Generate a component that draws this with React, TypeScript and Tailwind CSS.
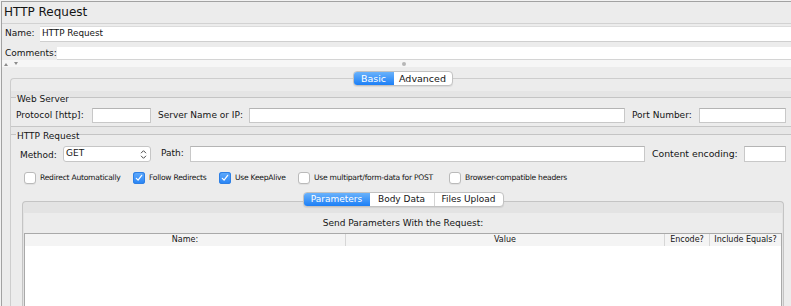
import type { ReactNode } from "react";

function Field({ className = "" }: { className?: string }) {
  return <div className={`h-[15px] border border-[#c8c8c8] border-t-[#b4b4b4] bg-white ${className}`} />;
}

function GroupTitle({ children }: { children: ReactNode }) {
  return (
    <div className="flex h-[8px] items-start">
      <div className="h-px w-[5px] bg-[#c4c4c4]" />
      <span className="-mt-[4px] px-px text-[9px] leading-[12px]">{children}</span>
      <div className="h-px flex-1 bg-[#c4c4c4]" />
    </div>
  );
}

function Check({ checked = false, label, className = "" }: { checked?: boolean; label: string; className?: string }) {
  return (
    <div className={`flex shrink-0 items-center ${className}`}>
      {checked ? (
        <div className="flex h-[12px] w-[12px] items-center justify-center rounded-[3px] bg-[linear-gradient(#63acfb,#2683f6)] shadow-[inset_0_0_0_1px_#2e7fe4]">
          <svg width="8" height="8" viewBox="0 0 8 8">
            <path d="M1.3 4.3 L3.1 6.2 L6.7 1.3" stroke="white" strokeWidth="1.2" fill="none" strokeLinecap="round" strokeLinejoin="round" />
          </svg>
        </div>
      ) : (
        <div className="h-[12px] w-[12px] rounded-[3px] border border-[#bababa] bg-white shadow-[0_1px_0_rgba(0,0,0,0.05)]" />
      )}
      <span className="ml-[4px] whitespace-nowrap text-[7.6px] leading-[12px] tracking-[-0.25px]">{label}</span>
    </div>
  );
}

function Segments({ items, widths, active, size }: { items: string[]; widths: string[]; active: number; size: string }) {
  return (
    <div className="relative z-10 flex h-[15px] overflow-hidden rounded-[4px] border border-[#c2c2c2] bg-white shadow-[0_1px_1px_rgba(0,0,0,0.08)]">
      {items.map((item, i) => (
        <div
          key={item}
          className={`${widths[i]} ${size} flex items-center justify-center leading-none ${
            i === active
              ? "bg-[linear-gradient(#6ab2fb,#1c7ff6)] text-white"
              : i > active + 1
                ? "border-l border-[#d4d4d4] text-[#141414]"
                : "text-[#141414]"
          }`}
        >
          {item}
        </div>
      ))}
    </div>
  );
}

export default function App() {
  return (
    <div className="h-[306px] w-[791px] overflow-hidden bg-[#f2f2f2] pl-px pt-px font-['DejaVu_Sans',sans-serif] text-[#141414]">
      <div className="flex h-full flex-col border-l border-t border-[#a2a2a2] bg-[#ececec]">
        <div className="h-[22px] border-b border-[#d2d2d2] pl-[2px] text-[12px] leading-[21px]">HTTP Request</div>

        {/* name + comments */}
        <div className="mt-[2px] flex h-[16px] items-center text-[9px]">
          <span className="w-[38px] pl-[3px]">Name:</span>
          <div className="flex h-full flex-1 items-center border-y border-t-[#dcdcdc] border-b-[#cfcfcf] bg-white pl-[2px] text-[8.8px]">
            HTTP Request
          </div>
        </div>
        <div className="mt-[5px] flex h-[13px] items-center text-[9px]">
          <span className="w-[55px] pl-[3px]">Comments:</span>
          <div className="h-full flex-1 border-b border-[#d4d4d4] bg-white" />
        </div>

        {/* split pane divider */}
        <div className="flex h-[7px] items-center bg-[#f6f6f6] pl-[2px]">
          <svg width="14" height="4" viewBox="0 0 14 4">
            <path d="M0 4 L2 1 L4 4 Z" fill="#8c8c8c" />
            <path d="M10 0 L14 0 L12 3 Z" fill="#8c8c8c" />
          </svg>
          <div className="ml-[384px] h-[4px] w-[4px] rounded-full bg-[#b6b6b6]" />
        </div>

        {/* Basic / Advanced */}
        <div className="flex flex-1 flex-col">
          <div className="mt-[4px] flex justify-center pl-[12px]">
            <Segments items={["Basic", "Advanced"]} widths={["w-[40px]", "w-[58px]"]} active={0} size="text-[9.5px]" />
          </div>
          <div className="-mt-[8px] ml-[8px] flex flex-1 flex-col rounded-tl-[4px] border-l border-t border-[#cdcdcd]">
            <div className="h-[12px]" />
            <div className="h-[6px] bg-[#e5e5e5]" />

            <GroupTitle>Web Server</GroupTitle>
            <div className="mt-[3px] flex h-[15px] items-center px-[5px] text-[9px]">
              <span className="w-[76px] whitespace-nowrap">Protocol [http]:</span>
              <Field className="w-[59px]" />
              <span className="ml-[7px] w-[91px] whitespace-nowrap">Server Name or IP:</span>
              <Field className="flex-1" />
              <span className="ml-[7px] w-[67px] whitespace-nowrap">Port Number:</span>
              <Field className="w-[87px]" />
            </div>
            <div className="mt-[3px] h-px bg-[#c6c6c6]" />
            <div className="h-[7px] bg-[#e7e7e7]" />

            <GroupTitle>HTTP Request</GroupTitle>
            <div className="mt-[4px] flex h-[16px] items-center pl-[9px] pr-[5px] text-[9px]">
              <span className="mt-[3px] w-[43px]">Method:</span>
              <div className="flex h-[16px] w-[88px] items-center justify-between rounded-[3px] border border-[#c6c6c6] bg-white pl-[2px] pr-[3px]">
                <span>GET</span>
                <svg width="7" height="11" viewBox="0 0 7 11">
                  <path d="M1 4.2 L3.5 1.7 L6 4.2 M1 6.8 L3.5 9.3 L6 6.8" stroke="#4a4a4a" strokeWidth="1" fill="none" />
                </svg>
              </div>
              <span className="ml-[10px] w-[29px]">Path:</span>
              <Field className="h-[16px] flex-1" />
              <span className="ml-[7px] w-[92px] whitespace-nowrap text-[9.3px]">Content encoding:</span>
              <Field className="h-[16px] w-[42px]" />
            </div>

            <div className="mt-[10px] flex h-[12px] items-center pl-[13px]">
              <Check className="w-[109px]" label="Redirect Automatically" />
              <Check className="w-[86px]" checked label="Follow Redirects" />
              <Check className="w-[79px]" checked label="Use KeepAlive" />
              <Check className="w-[151px]" label="Use multipart/form-data for POST" />
              <Check label="Browser-compatible headers" />
            </div>

            {/* Parameters / Body Data / Files Upload */}
            <div className="mt-[8px] flex justify-center pl-[11px] pr-[7px]">
              <Segments
                items={["Parameters", "Body Data", "Files Upload"]}
                widths={["w-[66px]", "w-[64px]", "w-[69px]"]}
                active={0}
                size="text-[9px]"
              />
            </div>
            <div className="-mt-[6px] ml-[11px] mr-[7px] flex flex-1 flex-col rounded-t-[4px] border border-b-0 border-[#c4c4c4] bg-[#e3e3e3] px-px pt-[11px]">
              <div className="flex flex-1 flex-col bg-[#ececec]">
                <div className="h-[20px] text-center text-[9px] leading-[20px]">Send Parameters With the Request:</div>
                <div className="flex-1 border-x border-t border-[#a9a9a9] bg-white">
                  <div className="grid h-[12px] grid-cols-[320px_319px_45px_1fr] bg-[#f4f4f4] text-center text-[8px] leading-[12px]">
                    <span>Name:</span>
                    <span className="border-l border-[#d6d6d6]">Value</span>
                    <span className="border-l border-[#d6d6d6]">Encode?</span>
                    <span className="border-l border-[#d6d6d6]">Include Equals?</span>
                  </div>
                </div>
              </div>
            </div>
          </div>
        </div>
      </div>
    </div>
  );
}
